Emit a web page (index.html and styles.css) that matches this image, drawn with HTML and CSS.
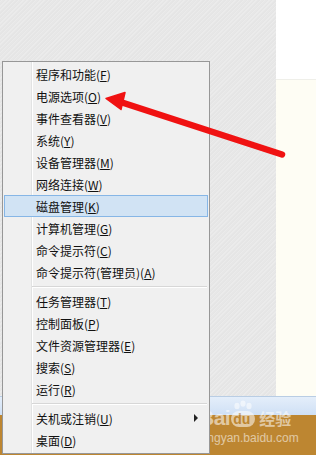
FILE: index.html
```html
<!DOCTYPE html>
<html>
<head>
<meta charset="utf-8">
<link rel="stylesheet" href="styles.css">
</head>
<body>
<div class="screen">
  <div class="top">
    <div class="texture"></div>
    <div class="side">
      <div class="white"></div>
      <div class="cream"></div>
    </div>
  </div>
  <div class="strip"></div>
  <div class="taskbar"></div>

  <div class="watermark">
    <div class="wm-row">
      <span class="wm-bai">Bai</span>
      <span class="wm-logo">
        <svg width="26" height="28" viewBox="0 0 26 28">
          <ellipse cx="7" cy="6" rx="2.6" ry="3.2" fill="#fff"/>
          <ellipse cx="13" cy="3.6" rx="2.6" ry="3.2" fill="#fff"/>
          <ellipse cx="19" cy="6" rx="2.6" ry="3.2" fill="#fff"/>
          <rect x="1" y="11" width="24" height="16" rx="8" fill="#fff"/>
        </svg>
        <span class="wm-du">du</span>
      </span>
      <span class="wm-cn">经验</span>
    </div>
    <div class="wm-url">jingyan.baidu.com</div>
  </div>

  <div class="menu">
    <div class="item">程序和功能(<u>F</u>)</div>
    <div class="item">电源选项(<u>O</u>)</div>
    <div class="item">事件查看器(<u>V</u>)</div>
    <div class="item">系统(<u>Y</u>)</div>
    <div class="item">设备管理器(<u>M</u>)</div>
    <div class="item">网络连接(<u>W</u>)</div>
    <div class="item active">磁盘管理(<u>K</u>)</div>
    <div class="item">计算机管理(<u>G</u>)</div>
    <div class="item">命令提示符(<u>C</u>)</div>
    <div class="item">命令提示符(管理员)(<u>A</u>)</div>
    <div class="sep"></div>
    <div class="item">任务管理器(<u>T</u>)</div>
    <div class="item">控制面板(<u>P</u>)</div>
    <div class="item">文件资源管理器(<u>E</u>)</div>
    <div class="item">搜索(<u>S</u>)</div>
    <div class="item">运行(<u>R</u>)</div>
    <div class="sep"></div>
    <div class="item">关机或注销(<u>U</u>)<span class="sub"></span></div>
    <div class="item">桌面(<u>D</u>)</div>
  </div>

  <svg class="annot" width="316" height="455" viewBox="0 0 316 455">
    <line x1="119" y1="101.5" x2="282" y2="154.5" stroke="#f01212" stroke-width="6.5" stroke-linecap="round"/>
    <polygon points="106,98.5 125,92.5 121,109.5" fill="#f01212" stroke="#f01212" stroke-width="1.5" stroke-linejoin="round"/>
  </svg>
</div>
</body>
</html>
```
FILE: styles.css
```css
html, body {
  margin: 0;
  padding: 0;
}
body {
  width: 316px;
  height: 455px;
  overflow: hidden;
  font-family: "Noto Sans CJK SC", "Noto Sans", sans-serif;
}
.screen {
  position: relative;
  width: 316px;
  height: 455px;
  display: flex;
  flex-direction: column;
}
.top {
  display: flex;
  height: 396px;
}
.texture {
  width: 276px;
  background-color: #e7e7e7;
  background-image: repeating-linear-gradient(135deg, #e5e5e5 0px, #e5e5e5 1px, #ebebeb 1px, #ebebeb 2px, #e7e7e7 2px, #e7e7e7 3px);
}
.side {
  flex: 1;
  display: flex;
  flex-direction: column;
}
.white {
  height: 79px;
  background: #ffffff;
  border-bottom: 1px solid #efefe9;
}
.cream {
  flex: 1;
  background: #fefdf4;
}
.strip {
  height: 19px;
  background: linear-gradient(#e4eefa, #cfe0f5);
  border-top: 1px solid #b9cde4;
  box-sizing: border-box;
}
.taskbar {
  flex: 1;
  background: #bd8631;
}

/* context menu overlay */
.menu {
  position: absolute;
  left: 2px;
  top: 61px;
  width: 208px;
  height: 393px;
  box-sizing: border-box;
  border: 1px solid #979797;
  padding: 1px 0;
  background: linear-gradient(to right, #f0f0f0 28px, #e2e3e3 28px, #e2e3e3 29px, #ffffff 29px, #ffffff 30px, #f0f0f0 30px);
  color: #111;
  font-size: 12px;
}
.item {
  height: 22px;
  margin: 0 1px;
  padding-left: 31px;
  box-sizing: border-box;
  border: 1px solid transparent;
  display: flex;
  align-items: center;
  white-space: nowrap;
}
.item u {
  text-underline-offset: 1px;
}
.item.active {
  background: #d1e3f4;
  border-color: #86b6e6;
}
.sep {
  height: 7px;
  margin: 0 2px 0 29px;
  display: flex;
  flex-direction: column;
  justify-content: center;
}
.sep::before {
  content: "";
  height: 1px;
  background: #d7d7d7;
}
.sep::after {
  content: "";
  height: 1px;
  background: #ffffff;
}
.sub {
  margin-left: auto;
  margin-right: 9px;
  width: 0;
  height: 0;
  border-top: 4px solid transparent;
  border-bottom: 4px solid transparent;
  border-left: 4px solid #222;
}

/* annotation arrow overlay */
.annot {
  position: absolute;
  left: 0;
  top: 0;
  pointer-events: none;
}

/* watermark overlay */
.watermark {
  position: absolute;
  left: 199px;
  top: 398px;
  width: 110px;
  opacity: 0.55;
  color: #ffffff;
  font-family: "Liberation Sans", Arial, sans-serif;
}
.wm-row {
  display: flex;
  align-items: flex-end;
  height: 30px;
}
.wm-bai {
  font-size: 21px;
  font-weight: bold;
  line-height: 21px;
  letter-spacing: -0.5px;
}
.wm-logo {
  position: relative;
  width: 26px;
  height: 28px;
}
.wm-logo svg {
  display: block;
}
.wm-du {
  position: absolute;
  left: 3px;
  bottom: 1px;
  font-size: 14px;
  font-weight: bold;
  line-height: 15px;
  color: #bd8631;
}
.wm-cn {
  font-family: "Noto Sans CJK SC", sans-serif;
  font-size: 16px;
  line-height: 20px;
  margin-left: 3px;
  font-weight: bold;
}
.wm-url {
  font-size: 12px;
  margin-top: 3px;
  margin-left: 3px;
}
```
